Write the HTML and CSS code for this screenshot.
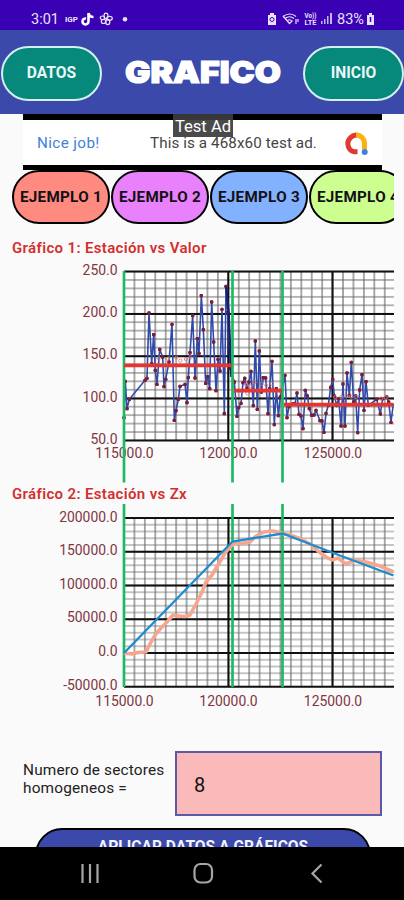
FILE: index.html
```html
<!DOCTYPE html>
<html lang="es">
<head>
<meta charset="utf-8">
<title>Grafico</title>
<link rel="stylesheet" href="styles.css">
</head>
<body>
<div class="status">
  <svg width="404" height="30" viewBox="0 0 404 30">
    <g fill="#e9e2fb">
      <text x="31" y="24" font-size="14" textLength="28" lengthAdjust="spacingAndGlyphs">3:01</text>
      <text x="65" y="21.700" font-size="6.500" font-weight="700" textLength="13" lengthAdjust="spacingAndGlyphs">IGP</text>
      <circle cx="125" cy="19.300" r="2.300"/>
      <text x="337" y="24" font-size="14" textLength="27" lengthAdjust="spacingAndGlyphs">83%</text>
      <text x="304.500" y="18.300" font-size="6.500" font-weight="700" textLength="12" lengthAdjust="spacingAndGlyphs">Vo))</text>
      <text x="304.500" y="24.700" font-size="6.500" font-weight="700" textLength="12" lengthAdjust="spacingAndGlyphs">LTE</text>
      <path d="M270 13h4v2h2v10h-8V15h2z"/>
      <path d="M367 15h2v-2h3v2h2v10h-7z"/>
      <path d="M321 24v-3h1.500v3zM324 24v-5h1.500v5zM327 24v-8h1.500v8zM330 24V13h2v11z" opacity=".8"/>
    </g>
    <path d="M88.500 13v8.500a3 3 0 1 1-2.500-3M88.500 13c.5 3 2.500 4 5 4" fill="none" stroke="#fff" stroke-width="2.600"/>
    <g fill="none" stroke="#e9e2fb" stroke-width="1.200">
      <ellipse cx="106" cy="16" rx="2" ry="2.800"/>
      <ellipse cx="109.500" cy="18.300" rx="2.800" ry="2"/>
      <ellipse cx="107.800" cy="22" rx="2" ry="2.600"/>
      <ellipse cx="103.500" cy="21.500" rx="2.200" ry="2"/>
      <ellipse cx="102.500" cy="17.800" rx="2.200" ry="1.800"/>
      <path d="M283 16.500q7-5 13 0M285 18.500q4.500-3.500 9 0M287.500 20.500q2-1.500 4 0"/>
      <path d="M283 16l6.500 7.500 3-3M296 19v5M298 22v-3"/>
    </g>
    <circle cx="272" cy="19.500" r="2" fill="none" stroke="#3a00b3"/>
    <path d="M370.500 17v5" stroke="#3a00b3" stroke-width="1.500"/>
  </svg>
</div>

<header class="header">
  <button class="nav-btn">DATOS</button>
  <svg class="title" width="160" height="34" viewBox="0 0 160 34">
    <text x="2" y="27.500" textLength="156" lengthAdjust="spacingAndGlyphs">GRAFICO</text>
  </svg>
  <button class="nav-btn">INICIO</button>
</header>

<main class="content">
  <div class="ad">
    <span class="ad-tag">Test Ad</span>
    <div class="ad-body">
      <span class="ad-nice">Nice job!</span>
      <span class="ad-text">This is a 468x60 test ad.</span>
      <svg width="26" height="26" viewBox="0 0 26 26" fill="none" stroke-width="5">
        <path d="M14.500 21.800H11.500a7.500 8 0 0 1-4.500-13.500Q9.500 5 14.500 5" stroke="#e0392f"/>
        <path d="M13 5a8.500 8.500 0 0 1 8.500 8.500v6" stroke="#fbb110"/>
        <circle cx="21.700" cy="22" r="3" fill="#3f7fe0" stroke="none"/>
      </svg>
    </div>
  </div>

  <div class="samples">
    <button class="pill coral">EJEMPLO 1</button>
    <button class="pill violet">EJEMPLO 2</button>
    <button class="pill blue">EJEMPLO 3</button>
    <button class="pill lime">EJEMPLO 4</button>
  </div>

  <section class="chart-block first">
    <h2>Gráfico 1: Estación vs Valor</h2>
    <svg class="chart" width="404" height="224" viewBox="0 260 404 224">
      <defs>
        <pattern id="minor1" x="124" y="271.500" width="10.430" height="8.450" patternUnits="userSpaceOnUse">
          <path d="M10.430 0V8.450M0 0V8.450M0 0H10.430M0 8.450H10.430" stroke="#666" stroke-width="1.100"/>
        </pattern>
        <marker id="dot" markerWidth="12" markerHeight="12" refX="6" refY="6" markerUnits="userSpaceOnUse"><circle cx="6" cy="6" r="5.800" fill="#7b1e38"/></marker>
      </defs>
      <rect x="124" y="271.500" width="270" height="169" fill="#fff"/>
      <rect x="124" y="271.500" width="270" height="169" fill="url(#minor1)"/>
      <path class="major" d="M124 271.500H394M124 314H394M124 356.200H394M124 398.500H394M124 440.500H394M228.300 271V441M332.500 271V441"/>
      <g class="labels" text-anchor="end">
        <text x="117.500" y="274.700">250.0</text><text x="117.500" y="317">200.0</text><text x="117.500" y="359.300">150.0</text><text x="117.500" y="401.700">100.0</text><text x="117.500" y="443.700">50.0</text>
      </g>
      <g class="labels" text-anchor="middle">
        <text x="124.500" y="458">115000.0</text><text x="228.500" y="458">120000.0</text><text x="333" y="458">125000.0</text>
      </g>
      <g transform="translate(100 262) scale(.33333)">
        <polyline class="series" points="72,467 76,358 81,440 88,412 135,355 141,349 147,153 155,305 161,218 166,325 171,367 179,262 188,285 192,374 197,352 207,300 216,187 223,475 228,446 235,412 240,373 255,367 261,422 265,347 270,272 278,161 285,348 292,230 297,274 304,101 310,203 317,364 323,344 329,380 335,120 341,240 348,386 354,292 360,327 366,142 373,455 378,73 383,152 391,320 403,360 411,463 416,437 423,424 429,362 434,349 441,378 447,360 453,328 460,431 466,237 472,442 478,267 484,390 490,347 497,348 504,455 509,380 516,298 523,488 529,380 535,461 541,405 555,340 561,467 567,434 580,425 585,425 591,393 597,457 603,462 609,500 616,385 622,402 628,440 635,460 642,459 648,445 660,476 666,477 672,511 678,454 685,430 692,376 698,352 703,402 710,430 716,410 723,492 729,366 735,492 741,333 748,400 754,301 761,420 767,402 773,512 779,384 786,338 792,445 798,359 805,430 830,412 841,456 848,410 860,405 866,420 873,481 880,425"/>
        <path d="M378 73L386 152L394 345" fill="none" stroke="#17206f" stroke-width="7"/>
        <g class="rings">
          <circle cx="176" cy="289" r="5"/><circle cx="204" cy="290" r="5"/><circle cx="229" cy="287" r="5"/><circle cx="241" cy="296" r="5"/><circle cx="258" cy="291" r="5"/><circle cx="272" cy="286" r="5"/>
          <circle cx="438" cy="368" r="5"/><circle cx="450" cy="373" r="5"/><circle cx="463" cy="361" r="5"/><circle cx="484" cy="366" r="5"/><circle cx="499" cy="370" r="5"/><circle cx="516" cy="365" r="5"/><circle cx="442" cy="394" r="5"/>
          <circle cx="706" cy="406" r="5"/><circle cx="724" cy="405" r="5"/><circle cx="740" cy="402" r="5"/><circle cx="753" cy="404" r="5"/><circle cx="769" cy="405" r="5"/><circle cx="843" cy="410" r="5"/><circle cx="857" cy="407" r="5"/>
        </g>
      </g>
      <path class="sector" d="M124 271V482.500M232.500 271V482.500M282.500 271V482.500"/>
      <path d="M124 365.300H231.500M234 390.600H282M284 404.600H393.500" stroke="#e53532" stroke-width="3.800"/>
    </svg>
  </section>

  <section class="chart-block second">
    <h2>Gráfico 2: Estación vs Zx</h2>
    <svg class="chart" width="404" height="208" viewBox="0 502 404 208">
      <defs>
        <pattern id="minor2" x="124" y="518" width="10.430" height="6.750" patternUnits="userSpaceOnUse">
          <path d="M0 0H10.430M0 6.750H10.430" stroke="#888" stroke-width="1"/>
          <path d="M10.430 0V6.750M0 0V6.750" stroke="#666" stroke-width="1.100"/>
        </pattern>
      </defs>
      <rect x="124" y="518" width="270" height="168.700" fill="#fff"/>
      <rect x="124" y="518" width="270" height="168.700" fill="url(#minor2)"/>
      <path class="major" d="M124 518H394M124 551.700H394M124 585.400H394M124 619.200H394M124 653H394M124 686.700H394M228.500 518V687M332.500 518V687"/>
      <g class="labels" text-anchor="end">
        <text x="117.500" y="521.500">200000.0</text><text x="117.500" y="555.200">150000.0</text><text x="117.500" y="588.900">100000.0</text><text x="117.500" y="622.200">50000.0</text><text x="117.500" y="656.200">0.0</text><text x="117.500" y="690">-50000.0</text>
      </g>
      <g class="labels" text-anchor="middle">
        <text x="124.500" y="705.500">115000.0</text><text x="228.500" y="705.500">120000.0</text><text x="333" y="705.500">125000.0</text>
      </g>
      <path class="sector" d="M124 504V687M232.500 504V687M282.500 504V687"/>
      <polyline points="124,653 132,654 138,652.500 146,652 150,644 155,635 161,628 166,623 173,615 179,616 185,616.500 190,615 196,604 202,592 206,582 212,575 218,565 225,553 230,547 234,543.500 241,543.500 250,542 256,536 264,532 273,531 281,533 290,535 301,539 310,544 318,551 326,557 332,560 338,558 346,564 355,560 366,562 380,566 393.500,572" fill="none" stroke="#f6a58f" stroke-width="3.600" stroke-linejoin="round"/>
      <polyline points="124,653 232.500,541.500 282.500,533.500 332,552.500 393.500,575.500" fill="none" stroke="#1c8bcf" stroke-width="2.300"/>
    </svg>
  </section>

  <div class="form">
    <label for="sectores">Numero de sectores homogeneos =</label>
    <input id="sectores" value="8">
  </div>
  <button class="apply">APLICAR DATOS A GRÁFICOS</button>
</main>

<nav class="softkeys">
  <svg width="404" height="53" viewBox="0 847 404 53" fill="none" stroke="#a6a6a6" stroke-width="2.200">
    <path d="M82.500 864V883M90 864V883M97.500 864V883"/>
    <rect x="194.500" y="864" width="17.500" height="18.500" rx="6"/>
    <path d="M321.500 864.500L312.500 873.500L321.500 882.500"/>
  </svg>
</nav>
</body>
</html>
```

FILE: styles.css
```css
* { box-sizing: border-box; }
body {
  margin: 0;
  width: 404px;
  height: 900px;
  overflow: hidden;
  display: flex;
  flex-direction: column;
  background: #fafafa;
  font-family: Roboto, "Liberation Sans", sans-serif;
}
svg { display: block; flex: none; }
button { padding: 0; font-family: inherit; white-space: nowrap; }
.status { flex: none; height: 30px; background: #3a00b3; }
.header {
  flex: none;
  height: 84px;
  padding: 0 0 0 1px;
  display: flex;
  align-items: center;
  background: #3a49aa;
}
.nav-btn {
  flex: none;
  width: 101px;
  height: 55px;
  margin-top: 2px;
  border: 2px solid #d5eef0;
  border-radius: 28px;
  background: #06897b;
  color: #e9f8f6;
  font-size: 15.6px;
  font-weight: 700;
}
.title { margin: 0 20px 0 21px; overflow: visible; }
.title text {
  fill: #fff;
  stroke: #fff;
  stroke-width: 1.2px;
  font-family: Inter, Roboto, sans-serif;
  font-size: 30.5px;
  font-weight: 900;
}
.content { flex: none; height: 733px; overflow: hidden; }
.ad {
  position: relative;
  width: 359px;
  height: 56px;
  margin-left: 23px;
  padding: 6px 0 5px;
  background: #000;
}
.ad-tag {
  position: absolute;
  left: 150px;
  top: 0;
  width: 60px;
  height: 23px;
  background: rgba(60, 60, 60, .93);
  color: #fff;
  font-size: 16.6px;
  line-height: 26px;
  text-align: center;
  white-space: nowrap;
}
.ad-body {
  height: 45px;
  padding-left: 14px;
  display: flex;
  align-items: center;
  background: #fff;
  font-size: 15.2px;
  white-space: nowrap;
}
.ad-nice { width: 113px; color: #427fdd; letter-spacing: .4px; }
.ad-text { width: 193px; color: #444; letter-spacing: .1px; }
.samples {
  width: 382px;
  height: 54px;
  margin-left: 12px;
  display: flex;
  gap: 1px;
  overflow: hidden;
}
.pill {
  flex: none;
  width: 98px;
  height: 54px;
  border: 2px solid #000;
  border-radius: 27px;
  color: #141014;
  font-size: 15.2px;
  font-weight: 700;
  letter-spacing: .3px;
}
.coral { background: #ff8a80; }
.violet { background: #e980fc; }
.blue { background: #82b1ff; }
.lime { background: #ccff90; }
.chart-block h2 {
  margin: 0 0 0 12px;
  color: #d32f2f;
  font-size: 15px;
  font-weight: 600;
  line-height: 18px;
  letter-spacing: .35px;
}
.first { padding-top: 15px; height: 260px; }
.first .chart { margin-top: 3px; }
.second { height: 226px; padding-top: 1px; }
.second .chart { margin-top: -1px; }
.labels text { fill: #803642; font-size: 13.9px; }
.major { stroke: #111; stroke-width: 2px; }
.sector { stroke: #1dba63; stroke-width: 2.7px; }
.series {
  fill: none;
  stroke: #304aab;
  stroke-width: 4.8px;
  marker-start: url(#dot);
  marker-mid: url(#dot);
}
.rings { fill: none; stroke: #d87880; stroke-width: 2.5px; }
.form {
  margin: 41px 22px 0 23px;
  height: 65px;
  display: flex;
  align-items: center;
}
.form label {
  width: 152px;
  margin-bottom: 10px;
  color: #222;
  font-size: 15.4px;
  line-height: 18px;
  letter-spacing: .16px;
}
.form input {
  width: 207px;
  height: 65px;
  padding: 3px 17px 0;
  border: 2px solid #5b59aa;
  border-radius: 0;
  background: #fbbaba;
  color: #111;
  font: 20px Roboto, sans-serif;
}
.apply {
  display: block;
  width: 336px;
  height: 54px;
  margin: 12px 0 0 35px;
  padding-bottom: 17px;
  border: 2px solid #000;
  border-radius: 27px;
  background: #3a49aa;
  color: #f4f4ff;
  font-size: 15.6px;
  font-weight: 700;
}
.softkeys { flex: none; height: 53px; background: #000; }
```
